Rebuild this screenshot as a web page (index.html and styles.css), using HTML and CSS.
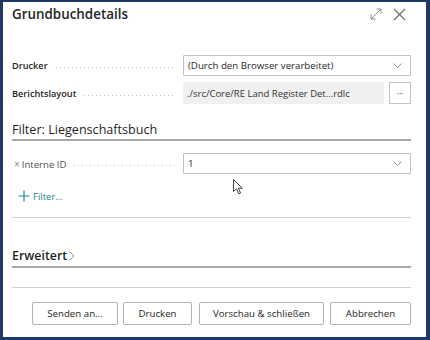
FILE: index.html
```html
<!DOCTYPE html>
<html lang="de">
<head>
<meta charset="utf-8">
<title>Grundbuchdetails</title>
<link rel="stylesheet" href="styles.css">
</head>
<body>
<div class="frame">
  <div class="dialog">
    <header class="head">
      <h1 class="title">Grundbuchdetails</h1>
      <div class="head-icons">
        <svg class="icon" width="12" height="12" viewBox="0 0 12 12" fill="none" stroke="#8a8a8a" stroke-width="1">
          <path d="M1 11 L11 1 M6.5 1 H11 V5.5 M1 6.5 V11 H5.5"/>
        </svg>
        <svg class="icon" width="13" height="13" viewBox="0 0 13 13" fill="none" stroke="#6e6e6e" stroke-width="1.2">
          <path d="M1 1 L12 12 M12 1 L1 12"/>
        </svg>
      </div>
    </header>

    <div class="fields">
      <div class="row">
        <div class="label-cell"><span class="label">Drucker</span><span class="leader"></span></div>
        <div class="input select">
          <span class="value">(Durch den Browser verarbeitet)</span>
          <svg class="chev" width="9" height="5" viewBox="0 0 9 5" fill="none" stroke="#8f8f8f" stroke-width="1"><path d="M0.5 0.5 L4.5 4.5 L8.5 0.5"/></svg>
        </div>
      </div>
      <div class="row">
        <div class="label-cell"><span class="label">Berichtslayout</span><span class="leader"></span></div>
        <div class="split">
          <div class="readonly">./src/Core/RE Land Register Det…rdlc</div>
          <button class="more" type="button">···</button>
        </div>
      </div>
    </div>

    <h2 class="group-title">Filter: Liegenschaftsbuch</h2>
    <div class="row filter-row">
      <div class="label-cell"><span class="label light"><span class="x">×</span>Interne ID</span><span class="leader"></span></div>
      <div class="input select">
        <span class="value">1</span>
        <svg class="chev" width="9" height="5" viewBox="0 0 9 5" fill="none" stroke="#8f8f8f" stroke-width="1"><path d="M0.5 0.5 L4.5 4.5 L8.5 0.5"/></svg>
      </div>
    </div>
    <div class="add-filter">
      <svg width="12" height="12" viewBox="0 0 12 12" fill="none" stroke="#1a8a8f" stroke-width="1.2"><path d="M6 0.5 V11.5 M0.5 6 H11.5"/></svg>
      <span>Filter...</span>
    </div>
    <div class="divider first"></div>

    <h2 class="group-title adv">Erweitert<svg class="adv-chev" width="6" height="10" viewBox="0 0 6 10" fill="none" stroke="#8a8a8a" stroke-width="1"><path d="M0.5 0.5 L5 5 L0.5 9.5"/></svg></h2>
    <div class="divider second"></div>

    <footer class="actions">
      <button class="btn btn-send" type="button">Senden an...</button>
      <button class="btn btn-print" type="button">Drucken</button>
      <button class="btn btn-preview" type="button">Vorschau &amp; schließen</button>
      <button class="btn btn-cancel" type="button">Abbrechen</button>
    </footer>

    <svg class="cursor" width="12" height="16" viewBox="0 0 12 16"><path d="M0.5 0.5 V12.5 L3.5 9.8 L5.8 14.8 L7.6 14 L5.4 9.2 L9.3 9.2 Z" fill="#fff" stroke="#444" stroke-width="1" stroke-linejoin="round"/></svg>
  </div>
</div>
</body>
</html>
```

FILE: styles.css
```css
* { box-sizing: border-box; }
html, body { margin: 0; padding: 0; background: #fff; }
body {
  font-family: "Open Sans", "Noto Sans", "Liberation Sans", sans-serif;
  color: #262626;
  width: 430px;
  height: 340px;
  overflow: hidden;
}
.frame {
  width: 430px;
  height: 340px;
  border-style: solid;
  border-color: #1d3869;
  border-width: 2px 4px 3px 3px;
  background: #fff;
}
.dialog {
  position: relative;
  padding: 0 15px 0 9px;
  display: flex;
  flex-direction: column;
}
.head {
  height: 24px;
  display: flex;
  align-items: center;
  justify-content: space-between;
}
.title {
  margin: 0;
  font-size: 13.4px;
  font-weight: 600;
  line-height: 24px;
  color: #262626;
}
.head-icons {
  display: flex;
  align-items: center;
  gap: 11px;
  margin-right: 5px;
}
.icon { display: block; }

.fields {
  margin-top: 29px;
  display: flex;
  flex-direction: column;
  gap: 6px;
}
.row {
  display: grid;
  grid-template-columns: 171px 228px;
  align-items: center;
}
.label-cell {
  display: flex;
  align-items: center;
  padding-right: 8px;
}
.label {
  font-size: 9.2px;
  font-weight: 600;
  color: #262626;
  white-space: nowrap;
}
.label.light {
  font-weight: 400;
  color: #505050;
  padding-left: 2px;
  font-size: 9.6px;
}
.x {
  color: #8a8a8a;
  margin-right: 2px;
  font-size: 10px;
}
.leader {
  flex: 1;
  height: 1px;
  margin-left: 8px;
  margin-top: 4px;
  background-image: linear-gradient(to right, #c0c0c0 1px, transparent 1px);
  background-size: 4px 1px;
  background-repeat: repeat-x;
}
.input {
  height: 21px;
  border: 1px solid #c2c2c2;
  border-radius: 1px;
  display: flex;
  align-items: center;
  justify-content: space-between;
  padding: 0 8px 0 4px;
  font-size: 9.7px;
  color: #262626;
  background: #fff;
}
.chev { display: block; }
.split {
  display: flex;
  gap: 5px;
  height: 22px;
}
.readonly {
  flex: 1;
  background: #f0f0f0;
  font-size: 9.5px;
  color: #333;
  padding-left: 4px;
  display: flex;
  align-items: center;
}
.more {
  width: 22px;
  height: 22px;
  padding: 0;
  border: 1px solid #c2c2c2;
  background: #fff;
  color: #7a7a7a;
  font-size: 10px;
  font-family: inherit;
  line-height: 1;
  letter-spacing: -0.5px;
}

.group-title {
  margin: 16px 0 0;
  font-size: 12.6px;
  font-weight: 400;
  line-height: 19px;
  color: #1f1f1f;
  border-bottom: 2px solid #a9a9a9;
}
.filter-row { margin-top: 12px; }
.add-filter {
  margin-top: 14px;
  height: 16px;
  display: flex;
  align-items: center;
  gap: 3px;
  padding-left: 6px;
  color: #1a8a8f;
  font-size: 9.5px;
}
.divider {
  height: 1px;
  background: #d0d0d0;
}
.divider.first { margin-top: 13px; }
.group-title.adv {
  margin-top: 28px;
  line-height: 20px;
  font-size: 12.4px;
  font-weight: 600;
  display: flex;
  align-items: center;
  gap: 2px;
}
.adv-chev { display: block; }
.divider.second { margin-top: 19px; }
.actions {
  margin-top: 14px;
  display: flex;
  justify-content: flex-end;
  gap: 6px;
}
.btn {
  height: 23px;
  padding: 0;
  border: 1px solid #b3b3b3;
  border-radius: 2px;
  background: #fff;
  font-family: inherit;
  font-size: 9.7px;
  color: #262626;
  white-space: nowrap;
  flex-shrink: 0;
}
.btn-send { width: 86px; }
.btn-print { width: 69px; margin-left: -1px; }
.btn-preview { width: 125px; margin-left: 1px; }
.btn-cancel { width: 81px; }
.cursor {
  position: absolute;
  left: 230px;
  top: 177px;
}
```
